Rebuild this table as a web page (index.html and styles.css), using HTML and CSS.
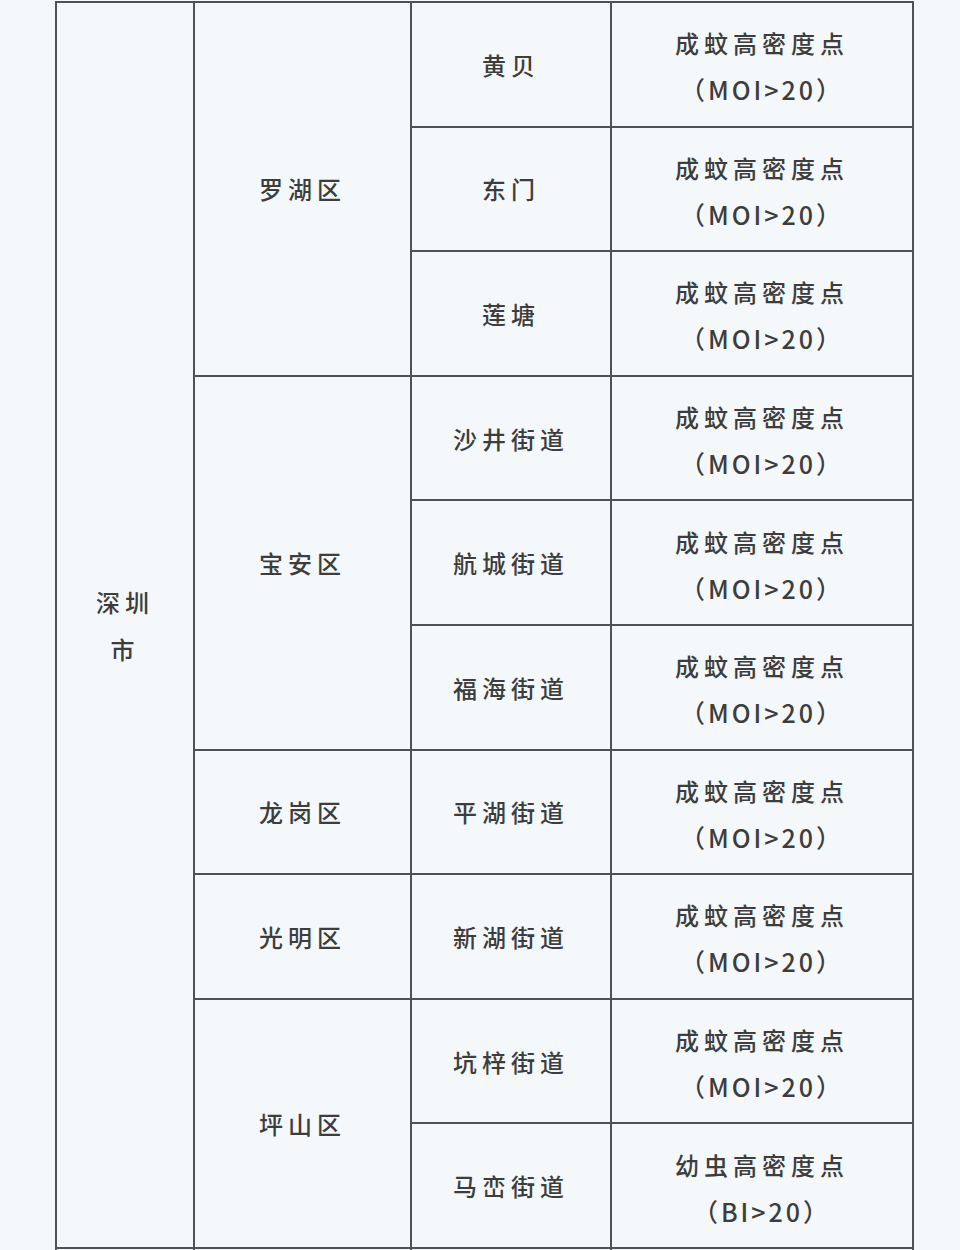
FILE: index.html
```html
<!DOCTYPE html>
<html lang="zh-CN">
<head>
<meta charset="utf-8">
<title>深圳市蚊媒密度监测</title>
<link rel="stylesheet" href="styles.css">
</head>
<body>
<table class="grid">
  <colgroup>
    <col class="c-city">
    <col class="c-dist">
    <col class="c-street">
    <col class="c-level">
  </colgroup>
  <tbody>
    <tr>
      <td class="city" rowspan="10">深圳<br>市</td>
      <td rowspan="3">罗湖区</td>
      <td>黄贝</td>
      <td class="level">成蚊高密度点<br><span class="code">（MOI&gt;20）</span></td>
    </tr>
    <tr>
      <td>东门</td>
      <td class="level">成蚊高密度点<br><span class="code">（MOI&gt;20）</span></td>
    </tr>
    <tr>
      <td>莲塘</td>
      <td class="level">成蚊高密度点<br><span class="code">（MOI&gt;20）</span></td>
    </tr>
    <tr>
      <td rowspan="3">宝安区</td>
      <td>沙井街道</td>
      <td class="level">成蚊高密度点<br><span class="code">（MOI&gt;20）</span></td>
    </tr>
    <tr>
      <td>航城街道</td>
      <td class="level">成蚊高密度点<br><span class="code">（MOI&gt;20）</span></td>
    </tr>
    <tr>
      <td>福海街道</td>
      <td class="level">成蚊高密度点<br><span class="code">（MOI&gt;20）</span></td>
    </tr>
    <tr>
      <td>龙岗区</td>
      <td>平湖街道</td>
      <td class="level">成蚊高密度点<br><span class="code">（MOI&gt;20）</span></td>
    </tr>
    <tr>
      <td>光明区</td>
      <td>新湖街道</td>
      <td class="level">成蚊高密度点<br><span class="code">（MOI&gt;20）</span></td>
    </tr>
    <tr>
      <td rowspan="2">坪山区</td>
      <td>坑梓街道</td>
      <td class="level">成蚊高密度点<br><span class="code">（MOI&gt;20）</span></td>
    </tr>
    <tr>
      <td>马峦街道</td>
      <td class="level">幼虫高密度点<br><span class="code">（BI&gt;20）</span></td>
    </tr>
    <tr class="next">
      <td></td>
      <td></td>
      <td></td>
      <td></td>
    </tr>
  </tbody>
</table>
</body>
</html>
```

FILE: styles.css
```css
html, body {
  margin: 0;
  padding: 0;
  background: #f4f8fb;
  height: 1250px;
  overflow: hidden;
}

.grid {
  margin: 1px 0 0 55px;
  border-collapse: collapse;
  table-layout: fixed;
  width: 858px;
  font-family: "Noto Sans CJK SC", "Noto Sans", sans-serif;
  font-size: 24px;
  font-weight: 500;
  color: #3d3d3d;
  letter-spacing: 5px;
}

.c-city { width: 138px; }
.c-dist { width: 217px; }
.c-street { width: 200px; }
.c-level { width: 302px; }

.grid td {
  border: 2px solid #4f5152;
  text-align: center;
  vertical-align: middle;
  padding: 0;
  height: 124.6px;
  box-sizing: border-box;
  line-height: 47px;
}

.grid td.level {
  padding-top: 4px;
}

.grid .code {
  letter-spacing: 3px;
  font-size: 25px;
}

.grid .next td {
  height: 60px;
}
```
